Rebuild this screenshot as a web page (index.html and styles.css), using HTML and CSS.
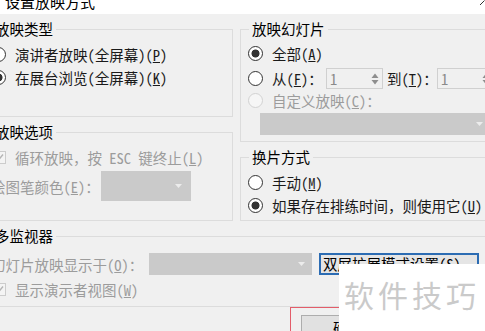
FILE: index.html
```html
<!DOCTYPE html>
<html lang="zh-CN">
<head>
<meta charset="UTF-8">
<meta name="viewport" content="width=device-width, initial-scale=1.0">
<title>设置放映方式</title>
<link rel="stylesheet" href="styles.css">
</head>
<body>
<div class="window">
  <div class="titlebar">
    <span class="title">设置放映方式</span>
    <svg class="close" width="6" height="6" viewBox="0 0 6 6"><path d="M1 5L5.5 0.5" stroke="#333" stroke-width="1" fill="none"/></svg>
  </div>

  <div class="dialog">
    <div class="columns">
      <div class="col col-left">
        <fieldset class="group type-group">
          <legend>放映类型</legend>
          <label class="row"><input type="radio" name="type" class="radio">演讲者放映(全屏幕)(<u>P</u>)</label>
          <label class="row"><input type="radio" name="type" class="radio" checked>在展台浏览(全屏幕)(<u>K</u>)</label>
        </fieldset>
        <fieldset class="group options-group">
          <legend>放映选项</legend>
          <div class="row disabled">
            <span class="check"><svg width="11" height="11" viewBox="0 0 11 11"><path d="M2 5.5L4.5 8L9 2.5" stroke="#b4b4b4" stroke-width="1.4" fill="none"/></svg></span>循环放映，按 ESC 键终止(<u>L</u>)
          </div>
          <div class="row pen-row disabled">
            <span class="pen-label">绘图笔颜色(<u>E</u>)：</span>
            <div class="select pen-select"><svg width="7" height="4" viewBox="0 0 7 4"><path d="M0 0H7L3.5 4Z" fill="#ececec"/></svg></div>
          </div>
        </fieldset>
      </div>

      <div class="col col-right">
        <fieldset class="group slides-group">
          <legend>放映幻灯片</legend>
          <label class="row tall"><input type="radio" name="slides" class="radio" checked>全部(<u>A</u>)</label>
          <div class="row tall">
            <input type="radio" name="slides" class="radio">
            <span class="from-label">从(<u>F</u>)：</span>
            <span class="spin-box">1<svg width="10" height="14" viewBox="0 0 10 14"><path d="M1.5 6L5 1.5L8.5 6ZM1.5 8L5 12.5L8.5 8Z" fill="#8e8e8e"/></svg></span>
            <span class="to-label">到(<u>T</u>)：</span>
            <span class="spin-box">1<svg width="10" height="14" viewBox="0 0 10 14"><path d="M1.5 6L5 1.5L8.5 6ZM1.5 8L5 12.5L8.5 8Z" fill="#8e8e8e"/></svg></span>
          </div>
          <label class="row short disabled"><input type="radio" class="radio" disabled>自定义放映(<u>C</u>)：</label>
          <div class="select custom-select"><svg width="7" height="4" viewBox="0 0 7 4"><path d="M0 0H7L3.5 4Z" fill="#ececec"/></svg></div>
        </fieldset>
        <fieldset class="group advance-group">
          <legend>换片方式</legend>
          <label class="row"><input type="radio" name="advance" class="radio">手动(<u>M</u>)</label>
          <label class="row"><input type="radio" name="advance" class="radio" checked>如果存在排练时间，则使用它(<u>U</u>)</label>
        </fieldset>
      </div>
    </div>

    <fieldset class="group monitor-group">
      <legend>多监视器</legend>
      <div class="row monitor-row disabled">
        <span class="monitor-label">幻灯片放映显示于(<u>O</u>)：</span>
        <div class="select monitor-select"><svg width="7" height="4" viewBox="0 0 7 4"><path d="M0 0H7L3.5 4Z" fill="#ececec"/></svg></div>
        <button class="dual-button">双屏扩展模式设置(<u>S</u>)</button>
      </div>
      <div class="row presenter-row disabled">
        <span class="check"><svg width="11" height="11" viewBox="0 0 11 11"><path d="M2 5.5L4.5 8L9 2.5" stroke="#b4b4b4" stroke-width="1.4" fill="none"/></svg></span>显示演示者视图(<u>W</u>)
      </div>
    </fieldset>

    <div class="footer">
      <div class="highlight">
        <button class="btn">确定</button>
        <button class="btn">取消</button>
      </div>
    </div>
  </div>

  <!-- watermark pasted over the corner of the screenshot -->
  <div class="watermark">软件技巧</div>
</div>
</body>
</html>
```

FILE: styles.css
```css
body {
    margin: 0;
    background-color: #f0f0f0;
    font-family: "Noto Sans Mono CJK SC", "Noto Sans CJK SC", sans-serif;
    font-size: 14.5px;
    color: #1a1a1a;
    overflow: hidden;
}

.window {
    position: relative;
    width: 485px;
    height: 331px;
    overflow: hidden;
}

/* Title bar, cut off at the top */
.titlebar {
    height: 14px;
    background-color: #fff;
    display: flex;
    justify-content: space-between;
    overflow: hidden;
}

.title {
    font-size: 15px;
    line-height: 15px;
    margin: -6px 0 0 5px;
    color: #000;
}

.close {
    flex: none;
}

.dialog {
    width: 515px;
    margin-left: -17px;
    padding-top: 7px;
}

.columns {
    display: flex;
    gap: 7px;
}

.col {
    display: flex;
    flex-direction: column;
    gap: 7px;
}

.col-left {
    width: 250px;
}

.col-right {
    width: 258px;
}

/* Group boxes */
.group {
    margin: 0;
    padding: 6px 7px 0;
    border: 1px solid #dcdcdc;
    min-width: 0;
}

.group legend {
    margin-left: 1px;
    padding: 0 3px;
    line-height: 16px;
    color: #000;
}

.type-group {
    padding-bottom: 27px;
}

.options-group,
.advance-group {
    flex-grow: 1;
    padding-bottom: 3px;
}

.slides-group {
    padding-top: 4px;
    padding-bottom: 6px;
}

.monitor-group {
    margin-top: 7px;
    padding-top: 9px;
    padding-bottom: 5px;
}

/* Rows */
.row {
    display: flex;
    align-items: center;
    height: 23px;
    white-space: nowrap;
}

.row.tall {
    height: 25px;
}

.row.short {
    height: 19px;
}

.disabled {
    color: #9c9c9c;
}

.radio {
    appearance: none;
    flex: none;
    width: 15px;
    height: 15px;
    margin: 0 9px 0 0;
    border: 1px solid #333;
    border-radius: 50%;
    background-color: #fff;
}

.radio:checked {
    background: radial-gradient(circle, #333 0 3.6px, #fff 4.4px);
}

.radio:disabled {
    border-color: #d2d2d2;
    background-color: #f6f6f6;
}

.check {
    flex: none;
    display: flex;
    align-items: center;
    justify-content: center;
    width: 13px;
    height: 13px;
    box-sizing: border-box;
    margin: 0 9px 0 2px;
    border: 1px solid #cccccc;
    background-color: #f4f4f4;
}

.select {
    display: flex;
    align-items: center;
    justify-content: flex-end;
    padding-right: 7px;
    box-sizing: border-box;
    background-color: #cacaca;
}

.pen-row {
    height: 30px;
    margin-top: 2px;
}

.pen-label {
    width: 110px;
    flex: none;
}

.pen-select {
    width: 90px;
    height: 30px;
    padding-right: 9px;
}

/* From / to spin boxes */
.from-label {
    width: 54px;
    flex: none;
}

.to-label {
    width: 50px;
    margin-left: 4px;
    flex: none;
}

.spin-box {
    flex: none;
    display: flex;
    align-items: center;
    justify-content: space-between;
    width: 57px;
    height: 21px;
    box-sizing: border-box;
    padding: 0 2px 0 3px;
    border: 1px solid #d0d0d0;
    color: #8a8a8a;
}

.custom-select {
    height: 22px;
    margin: 3px 0 0 12px;
}

/* Multi monitor */
.monitor-row {
    height: 22px;
}

.monitor-label {
    width: 158px;
    flex: none;
}

.monitor-select {
    width: 163px;
    height: 22px;
}

.dual-button {
    flex: none;
    width: 160px;
    height: 22px;
    margin-left: 7px;
    padding: 0 0 0 2px;
    text-align: left;
    font: inherit;
    line-height: 18px;
    color: #000;
    background-color: #e5e5e5;
    border: 2px solid #2c6cb3;
    overflow: hidden;
    white-space: nowrap;
}

.presenter-row {
    height: 24px;
    margin-top: 2px;
}

/* Footer buttons */
.footer {
    display: flex;
    padding-left: 307px;
}

.highlight {
    display: flex;
    gap: 8px;
    padding: 7px 10px;
    border: 1px solid #e35d6a;
}

.btn {
    width: 93px;
    height: 23px;
    font: inherit;
    color: #000;
    background-color: #e1e1e1;
    border: 1px solid #adadad;
}

.watermark {
    position: absolute;
    left: 339px;
    top: 264px;
    right: 0;
    bottom: 0;
    padding: 15px 0 0 5px;
    background-color: #fff;
    color: #cacaca;
    font-family: "Noto Sans CJK SC", sans-serif;
    font-size: 30px;
    line-height: 30px;
    letter-spacing: 4px;
    white-space: nowrap;
}
```
